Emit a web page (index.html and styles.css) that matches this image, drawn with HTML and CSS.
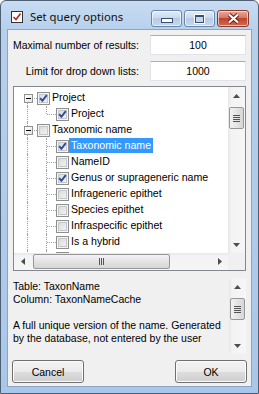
FILE: index.html
```html
<!DOCTYPE html>
<html lang="en">
<head>
    <meta charset="UTF-8">
    <title>Set query options</title>
    <link rel="stylesheet" href="styles.css">
</head>
<body>
<div class="window">
    <div class="titlebar">
        <span class="app-icon">
            <svg width="12" height="12" viewBox="0 0 12 12"><rect x="0.5" y="0.5" width="11" height="11" fill="#fff" stroke="#333"/><path d="M2.5 6 L5 8.5 L9.5 2.5" fill="none" stroke="#c0202a" stroke-width="1.6"/></svg>
        </span>
        <span class="title">Set query options</span>
        <div class="caption-buttons">
            <span class="cap"><i class="glyph-min"></i></span>
            <span class="cap"><i class="glyph-max"></i></span>
            <span class="cap close">
                <svg width="15" height="11" viewBox="0 0 15 11"><path d="M3 1.5 L12 9.5 M12 1.5 L3 9.5" stroke="#6b1a10" stroke-width="4"/><path d="M3 1.5 L12 9.5 M12 1.5 L3 9.5" stroke="#fff" stroke-width="2.2"/></svg>
            </span>
        </div>
    </div>

    <div class="client">
        <div class="field-row">
            <label>Maximal number of results:</label>
            <input class="textbox" value="100">
        </div>
        <div class="field-row second">
            <label>Limit for drop down lists:</label>
            <input class="textbox" value="1000">
        </div>

        <div class="tree">
            <div class="tree-main">
                <div class="tree-rows">
                    <div class="node">
                        <span class="g exp first"><i class="box"></i></span>
                        <span class="cb on"><svg width="11" height="11" viewBox="0 0 11 11"><path d="M2.2 5.2 L4.4 7.8 L8.8 2.2" fill="none" stroke="#2e4996" stroke-width="1.9"/></svg></span>
                        <span class="txt">Project</span>
                    </div>
                    <div class="node">
                        <span class="g v"></span>
                        <span class="g e"></span>
                        <span class="cb on"><svg width="11" height="11" viewBox="0 0 11 11"><path d="M2.2 5.2 L4.4 7.8 L8.8 2.2" fill="none" stroke="#2e4996" stroke-width="1.9"/></svg></span>
                        <span class="txt">Project</span>
                    </div>
                    <div class="node">
                        <span class="g exp"><i class="box"></i></span>
                        <span class="cb"></span>
                        <span class="txt">Taxonomic name</span>
                    </div>
                    <div class="node">
                        <span class="g v"></span>
                        <span class="g t"></span>
                        <span class="cb on"><svg width="11" height="11" viewBox="0 0 11 11"><path d="M2.2 5.2 L4.4 7.8 L8.8 2.2" fill="none" stroke="#2e4996" stroke-width="1.9"/></svg></span>
                        <span class="txt selected">Taxonomic name</span>
                    </div>
                    <div class="node">
                        <span class="g v"></span>
                        <span class="g t"></span>
                        <span class="cb"></span>
                        <span class="txt">NameID</span>
                    </div>
                    <div class="node">
                        <span class="g v"></span>
                        <span class="g t"></span>
                        <span class="cb on"><svg width="11" height="11" viewBox="0 0 11 11"><path d="M2.2 5.2 L4.4 7.8 L8.8 2.2" fill="none" stroke="#2e4996" stroke-width="1.9"/></svg></span>
                        <span class="txt">Genus or suprageneric name</span>
                    </div>
                    <div class="node">
                        <span class="g v"></span>
                        <span class="g t"></span>
                        <span class="cb"></span>
                        <span class="txt">Infrageneric epithet</span>
                    </div>
                    <div class="node">
                        <span class="g v"></span>
                        <span class="g t"></span>
                        <span class="cb"></span>
                        <span class="txt">Species epithet</span>
                    </div>
                    <div class="node">
                        <span class="g v"></span>
                        <span class="g t"></span>
                        <span class="cb"></span>
                        <span class="txt">Infraspecific epithet</span>
                    </div>
                    <div class="node">
                        <span class="g v"></span>
                        <span class="g t"></span>
                        <span class="cb"></span>
                        <span class="txt">Is a hybrid</span>
                    </div>
                    <div class="node">
                        <span class="g v"></span>
                        <span class="g t"></span>
                        <span class="cb"></span>
                        <span class="txt">Taxonomic rank</span>
                    </div>
                </div>
                <div class="vscroll">
                    <span class="arrow"><svg width="7" height="4" viewBox="0 0 7 4"><path d="M0 4 L3.5 0 L7 4 Z" fill="#4d4d4d"/></svg></span>
                    <div class="track">
                        <div class="thumb"><i></i><i></i><i></i><i></i></div>
                    </div>
                    <span class="arrow"><svg width="7" height="4" viewBox="0 0 7 4"><path d="M0 0 L3.5 4 L7 0 Z" fill="#4d4d4d"/></svg></span>
                </div>
            </div>
            <div class="tree-bottom">
                <div class="hscroll">
                    <span class="arrow"><svg width="4" height="7" viewBox="0 0 4 7"><path d="M4 0 L0 3.5 L4 7 Z" fill="#4d4d4d"/></svg></span>
                    <div class="track">
                        <div class="thumb"><i></i><i></i><i></i></div>
                    </div>
                    <span class="arrow"><svg width="4" height="7" viewBox="0 0 4 7"><path d="M0 0 L4 3.5 L0 7 Z" fill="#4d4d4d"/></svg></span>
                </div>
                <div class="corner"></div>
            </div>
        </div>

        <div class="desc">
            <div class="desc-text">
                Table: TaxonName<br>
                Column: TaxonNameCache<br>
                <br>
                A full unique version of the name. Generated<br>
                by the database, not entered by the user
            </div>
            <div class="vscroll">
                <span class="arrow"><svg width="7" height="4" viewBox="0 0 7 4"><path d="M0 4 L3.5 0 L7 4 Z" fill="#4d4d4d"/></svg></span>
                <div class="track">
                    <div class="thumb"><i></i><i></i><i></i><i></i></div>
                </div>
                <span class="arrow"><svg width="7" height="4" viewBox="0 0 7 4"><path d="M0 0 L3.5 4 L7 0 Z" fill="#4d4d4d"/></svg></span>
            </div>
        </div>

        <div class="buttons">
            <button>Cancel</button>
            <button>OK</button>
        </div>
    </div>
</div>
</body>
</html>
```

FILE: styles.css
```css
html,
body {
    margin: 0;
    padding: 0;
}

body {
    width: 259px;
    height: 394px;
    overflow: hidden;
    background: #fff;
    font-family: "Liberation Sans", Arial, sans-serif;
    font-size: 10.5px;
    color: #000;
}

.window {
    width: 259px;
    height: 394px;
    box-sizing: border-box;
    border: 1px solid #4e5f73;
    border-radius: 6px 6px 0 0;
    background: linear-gradient(#c8dcf2, #b6d0ec 30px, #a9c7e9);
    padding: 0 6px 6px 6px;
    display: flex;
    flex-direction: column;
}

/* title bar */
.titlebar {
    height: 28px;
    flex: none;
    display: flex;
    align-items: center;
    padding-left: 4px;
}

.app-icon {
    width: 12px;
    height: 12px;
    display: block;
    margin-top: 3px;
}

.app-icon svg {
    display: block;
}

.title {
    margin-left: 7px;
    margin-top: 3px;
    font-family: "Noto Sans", sans-serif;
    font-size: 11.3px;
    color: #111;
    white-space: nowrap;
}

.caption-buttons {
    margin-left: auto;
    margin-right: 3px;
    align-self: flex-start;
    margin-top: 9px;
    display: flex;
    gap: 2px;
}

.cap {
    width: 31px;
    height: 17px;
    box-sizing: border-box;
    border: 1px solid #6a86ab;
    border-radius: 3px;
    background: linear-gradient(#e3ecf7, #c9daef 45%, #b5cbe6 50%, #c6d8ee);
    box-shadow: inset 0 0 0 1px rgba(255, 255, 255, 0.6);
    display: flex;
    align-items: center;
    justify-content: center;
}

.cap.close {
    width: 32px;
    border-color: #8a3a2c;
    background: linear-gradient(#e8a898, #d47a66 45%, #c0442c 50%, #cf6a50);
}

.glyph-min {
    display: block;
    width: 10px;
    height: 3px;
    margin-top: 4px;
    background: #fff;
    border: 1px solid #38506f;
}

.glyph-max {
    display: block;
    width: 7px;
    height: 5px;
    border: 1px solid #38506f;
    border-top-width: 2px;
    background: #c5d7ee;
    box-shadow: 0 0 0 1px #fff;
}

.cap svg {
    display: block;
}

/* client area */
.client {
    flex: 1;
    background: #f0f0f0;
    border: 1px solid #8ba4c4;
    padding: 0 5px;
    display: flex;
    flex-direction: column;
}

.field-row {
    margin-top: 5px;
    height: 20px;
    display: flex;
    align-items: center;
    justify-content: flex-end;
    white-space: nowrap;
}

.field-row.second {
    margin-top: 6px;
}

.field-row label {
    margin-right: 11px;
}

.textbox {
    width: 96px;
    height: 20px;
    box-sizing: border-box;
    margin: 0;
    padding: 0;
    border: 1px solid #e2e3ea;
    border-top-color: #abadb3;
    background: #fff;
    font: inherit;
    text-align: center;
    outline: none;
}

/* tree view */
.tree {
    margin-top: 5px;
    height: 185px;
    flex: none;
    box-sizing: border-box;
    border: 1px solid #828790;
    background: #fff;
    display: flex;
    flex-direction: column;
}

.tree-main {
    flex: 1;
    display: flex;
    min-height: 0;
}

.tree-rows {
    flex: 1;
    overflow: hidden;
    padding: 3px 0 0 4px;
}

.node {
    height: 16px;
    display: flex;
    align-items: flex-start;
    white-space: nowrap;
}

.g {
    width: 19px;
    height: 16px;
    flex: none;
    position: relative;
    display: flex;
    justify-content: center;
}

.g::before,
.g::after {
    content: "";
    position: absolute;
}

.g.v::before,
.g.t::before,
.g.exp::before {
    left: 9px;
    top: 0;
    bottom: 0;
    border-left: 1px dotted #a0a0a0;
}

.g.exp.first::before {
    top: 8px;
}

.g.e::before {
    left: 9px;
    top: 0;
    height: 8px;
    border-left: 1px dotted #a0a0a0;
}

.g.t::after,
.g.e::after,
.g.exp::after {
    left: 10px;
    right: 0;
    top: 8px;
    border-top: 1px dotted #a0a0a0;
}

.box {
    position: relative;
    z-index: 1;
    width: 9px;
    height: 9px;
    box-sizing: border-box;
    margin-top: 4px;
    margin-left: 1px;
    border: 1px solid #919191;
    background: linear-gradient(135deg, #fff, #e4e4e4);
}

.box::after {
    content: "";
    position: absolute;
    left: 1px;
    top: 3px;
    width: 5px;
    height: 1px;
    background: #000;
}

.cb {
    width: 13px;
    height: 13px;
    flex: none;
    box-sizing: border-box;
    margin-top: 2px;
    border: 1px solid #8e8f8f;
    background: linear-gradient(135deg, #d3d5d8, #f8f8f8);
    box-shadow: inset 0 0 0 1px #f4f4f4, inset 0 0 0 2px #c4c7cb;
}

.cb svg {
    display: block;
}

.txt {
    height: 15px;
    line-height: 15px;
    padding: 0 2px;
    font-size: 10.6px;
}

.txt.selected {
    background: #3399ff;
    color: #fff;
}

/* scroll bars */
.vscroll {
    width: 17px;
    flex: none;
    display: flex;
    flex-direction: column;
    background: linear-gradient(to right, #e7e7e7, #f3f3f3 3px, #f6f6f6);
}

.vscroll .arrow {
    height: 17px;
    flex: none;
    display: flex;
    align-items: center;
    justify-content: center;
}

.vscroll .track {
    flex: 1;
}

.vscroll .thumb {
    margin: 3px 1px 0 1px;
    height: 22px;
    box-sizing: border-box;
    border: 1px solid #979797;
    border-radius: 2px;
    background: linear-gradient(to right, #f2f2f2, #e4e4e4 50%, #d6d6d6);
    display: flex;
    flex-direction: column;
    align-items: center;
    justify-content: center;
    gap: 1px;
}

.vscroll .thumb i {
    display: block;
    width: 7px;
    height: 1px;
    background: #555;
}

.tree-bottom {
    height: 17px;
    flex: none;
    display: flex;
}

.hscroll {
    flex: 1;
    display: flex;
    background: linear-gradient(#e7e7e7, #f3f3f3 3px, #f6f6f6);
}

.hscroll .arrow {
    width: 17px;
    flex: none;
    display: flex;
    align-items: center;
    justify-content: center;
}

.hscroll .track {
    flex: 1;
}

.hscroll .thumb {
    margin: 1px 0 0 2px;
    width: 137px;
    height: 15px;
    box-sizing: border-box;
    border: 1px solid #979797;
    border-radius: 2px;
    background: linear-gradient(#f2f2f2, #e4e4e4 50%, #d6d6d6);
    display: flex;
    align-items: center;
    justify-content: center;
    gap: 1px;
}

.hscroll .thumb i {
    display: block;
    width: 1px;
    height: 7px;
    background: #555;
}

.corner {
    width: 17px;
    background: #f0f0f0;
}

/* description */
.desc {
    margin-top: 7px;
    height: 76px;
    flex: none;
    display: flex;
}

.desc-text {
    flex: 1;
    padding-top: 2px;
    line-height: 13px;
    white-space: nowrap;
    overflow: hidden;
}

/* buttons */
.buttons {
    margin: 6px -1px 0 -1px;
    display: flex;
    justify-content: space-between;
}

.buttons button {
    width: 72px;
    height: 23px;
    margin: 0;
    padding: 0;
    border: 1px solid #707070;
    border-radius: 3px;
    background: linear-gradient(#f2f2f2, #ebebeb 50%, #dddddd 50%, #cfcfcf);
    box-shadow: inset 0 0 0 1px #fcfcfc;
    font: inherit;
    color: #000;
}
```
